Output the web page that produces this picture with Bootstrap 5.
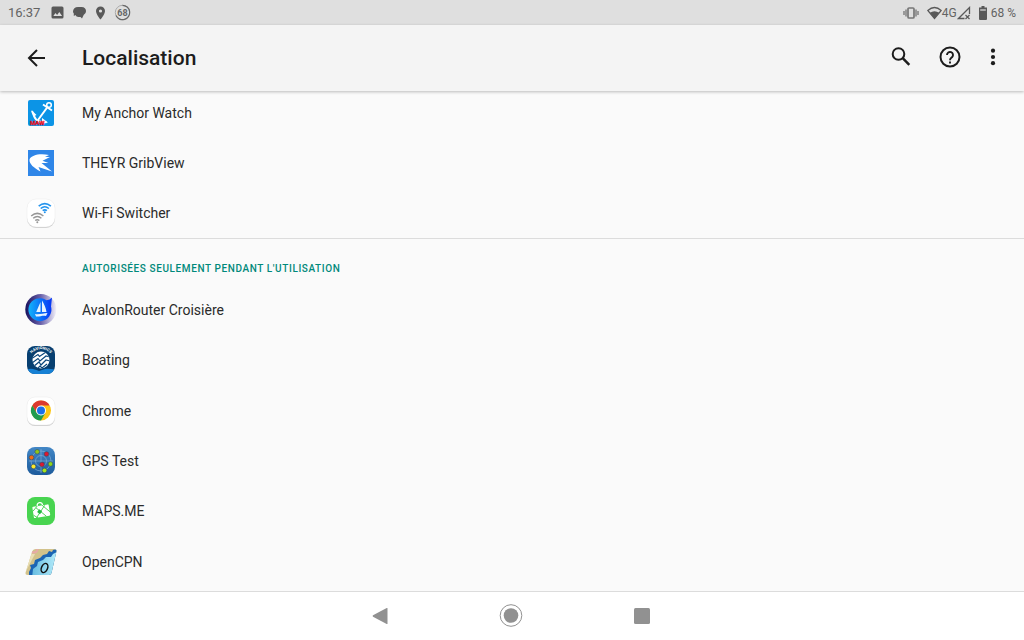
<!DOCTYPE html>
<html lang="fr">
<head>
<meta charset="utf-8">
<meta name="viewport" content="width=device-width, initial-scale=1">
<title>Localisation</title>
<link href="https://cdn.jsdelivr.net/npm/bootstrap@5.3.0/dist/css/bootstrap.min.css" rel="stylesheet">
<style>
  body { font-family: Roboto, "Liberation Sans", sans-serif; font-size: 14px; line-height: 20px; background: #fafafa; color: #2b2b2b; }
  svg { display: block; flex: none; }
  .status-bar { height: 25px; padding: 0 8px; background: #dfdfdf; color: #636363; font-size: 12px; }
  .clock { font-size: 13px; margin-right: 3px; }
  .notices { gap: 8px; }
  .app-bar { height: 66px; padding: 0 23px 0 25px; background: #f4f4f4; color: #1c1c1c; box-shadow: 0 1px 3px rgba(0,0,0,.25); z-index: 2; }
  .app-bar h1 { font-size: 21px; line-height: 28px; font-weight: 500; margin: 0 0 0 33px; }
  .tool-btn { padding: 0; border: 0; background: none; color: inherit; }
  .app-list { padding: 0; margin: 0; list-style: none; }
  .app-list li { flex: 1 1 0; min-height: 46px; }
  .app-list a { height: 100%; padding: 0 25px; gap: 25px; color: #2b2b2b; text-decoration: none; }
  .group-always { height: 151px; margin-top: -3px; border-bottom: 1px solid #dcdcdc; }
  .group-title { font-size: 10px; line-height: 14px; font-weight: 500; letter-spacing: .06em; color: #00897b; padding: 23px 0 9px 82px; margin: 0; text-transform: uppercase; }
  .nav-keys { height: 49px; padding-right: 2px; background: #fff; border-top: 1px solid #dcdcdc; gap: 107px; color: #919191; }
</style>
</head>
<body>
<div class="d-flex flex-column min-vh-100">
  <header class="status-bar d-flex align-items-center justify-content-between">
    <div class="notices d-flex align-items-center">
      <span class="clock">16:37</span>
      <svg width="13" height="13" viewBox="0 0 13 13"><rect x="0.500" y="0.500" width="12" height="12" rx="1.500" fill="#595959"/><path d="M2.300 10l2.200-3 1.600 1.900L8.300 6l2.800 4z" fill="#dfdfdf"/></svg>
      <svg width="15" height="14" viewBox="0 0 15 14"><path d="M6 1h3.500c3 0 4.500 1.800 4.500 4 0 1.800-1 3-2.200 3.800L10 12.500 8.500 11H6.500C5 11 4 10.300 3.500 9L1.800 10V7.500C1.200 7 1 6.200 1 5.500 1 3 3 1 6 1z" fill="#595959"/></svg>
      <svg width="11" height="14" viewBox="0 0 11 14"><path fill-rule="evenodd" d="M5.500.5A4.500 4.500 0 0 0 1 5c0 3.300 4.500 8.500 4.500 8.500S10 8.300 10 5A4.500 4.500 0 0 0 5.500.5zm0 2.900a1.600 1.600 0 1 1 0 3.200 1.600 1.600 0 0 1 0-3.200z" fill="#595959"/></svg>
      <svg width="17" height="17" viewBox="0 0 17 17"><circle cx="8.500" cy="8.500" r="7.200" fill="none" stroke="#aaa" stroke-width="1"/><path d="M8.500 1.300a7.200 7.200 0 1 1-6.500 10.300" fill="none" stroke="#686868" stroke-width="1.200"/><text x="8.500" y="11.800" font-size="9" font-weight="700" text-anchor="middle" fill="#686868">68</text></svg>
    </div>
    <div class="d-flex align-items-center">
      <svg class="me-2" width="16" height="12" viewBox="0 0 16 12"><path d="M1 4v4M3 2.500v7M13 2.500v7M15 4v4" stroke="#8d8d8d" stroke-width="1.700"/><rect x="5" y="1" width="6" height="10" rx="1" fill="none" stroke="#777" stroke-width="1.700"/></svg>
      <svg width="15" height="14" viewBox="0 0 15 14"><path d="M.8 4.500Q7.500-1.500 14.200 4.500L7.500 12.500z" fill="none" stroke="#595959" stroke-width="1.200"/><path d="M2.800 6.800Q7.500 3.500 12.200 6.800L7.500 12.500z" fill="#595959"/></svg>
      <span>4G</span>
      <svg width="14" height="14" viewBox="0 0 14 14"><path d="M7.500 12.500H1.500L12.500 1.500V8" fill="none" stroke="#595959" stroke-width="1.300"/><path d="M8.500 9l4 4m0-4l-4 4" stroke="#595959" stroke-width="1.200"/></svg>
      <svg class="ms-2 me-1" width="8" height="14" viewBox="0 0 8 14"><path d="M2.500 0h3v1.500H8V13a1 1 0 0 1-1 1H1a1 1 0 0 1-1-1V1.500h2.500z" fill="#595959"/><path d="M1.200 3h5.600v2H1.200z" fill="#aaa"/></svg>
      <span>68 %</span>
    </div>
  </header>

  <nav class="app-bar position-relative d-flex align-items-center" aria-label="Barre d'application">
    <button class="tool-btn" type="button" aria-label="Retour"><svg width="24" height="24" viewBox="0 0 24 24"><path d="M20 12H4.500M12 4L4 12l8 8" fill="none" stroke="currentColor" stroke-width="2"/></svg></button>
    <h1>Localisation</h1>
    <div class="d-flex align-items-center ms-auto pb-1">
      <button class="tool-btn" type="button" aria-label="Rechercher"><svg width="24" height="24" viewBox="0 0 24 24"><circle cx="9.500" cy="10" r="5.800" fill="none" stroke="currentColor" stroke-width="2"/><path d="M13.700 14.200L20.300 20.800" stroke="currentColor" stroke-width="2.500"/></svg></button>
      <button class="tool-btn ms-4" type="button" aria-label="Aide"><svg width="26" height="24" viewBox="0 0 26 24"><circle cx="13" cy="13" r="9.500" fill="none" stroke="currentColor" stroke-width="2"/><path d="M10 11a3 3 0 1 1 5.200 2C14 14.200 13 14.500 13 16.200M13 17.500v2" fill="none" stroke="currentColor" stroke-width="1.900"/></svg></button>
      <button class="tool-btn ms-4" type="button" aria-label="Plus d'options"><svg width="14" height="24" viewBox="0 0 14 24" fill="currentColor"><circle cx="6" cy="6.700" r="2.100"/><circle cx="6" cy="13" r="2.100"/><circle cx="6" cy="19.200" r="2.100"/></svg></button>
    </div>
  </nav>

  <main class="d-flex flex-column flex-grow-1">
    <ul class="app-list group-always d-flex flex-column">
      <li><a href="#" class="d-flex align-items-center">
        <svg width="32" height="32" viewBox="0 0 32 32"><rect x="3" y="3" width="26" height="26" rx="2" fill="#0c94e6"/><g fill="none" stroke="#fff"><circle cx="24" cy="8" r="2.300" stroke-width="1.500"/><path d="M22.500 10L13 23M18 7.500l9 6" stroke-width="2"/><path d="M7 14l2 5c1 3 3 4.500 5.500 5.500s5 1 7 .5" stroke-width="2"/></g><path d="M6.500 13l5 5-3 1.500zM17 21l6 4.500-6 1z" fill="#fff"/><text x="5" y="27.500" font-size="6" font-weight="700" fill="#e80f1c" stroke="#e80f1c" stroke-width=".3">MAW</text></svg>
        <span>My Anchor Watch</span></a></li>
      <li><a href="#" class="d-flex align-items-center">
        <svg width="32" height="32" viewBox="0 0 32 32"><rect x="3" y="3" width="26" height="26" fill="#2f86e8"/><path d="M24 8C15 6 6 8 4.500 12.500C4 17 9 21 15.500 24.500L13.500 20L27 24.500L16.500 16L23.500 16L17.500 13.700L25 10L20 10z" fill="#fff"/></svg>
        <span>THEYR GribView</span></a></li>
      <li><a href="#" class="d-flex align-items-center">
        <svg width="32" height="32" viewBox="0 0 32 32"><rect x="2" y="3" width="28" height="28" rx="9" fill="#ccc"/><rect x="2" y="2" width="28" height="28" rx="9" fill="#fff" stroke="#e9e9e9" stroke-width=".5"/><g fill="none" stroke="#2494ee" stroke-width="1.600"><path d="M13.700 9.200Q19.800 4 25.900 9.200M15.700 11.500Q19.800 8 23.900 11.500M17.700 13.700Q19.800 12 21.900 13.700"/></g><circle cx="19.800" cy="15.300" r="1" fill="#2494ee"/><g fill="none" stroke="#979797" stroke-width="1.500"><path d="M6.200 19Q12.300 13.800 18.400 19M8.200 21.300Q12.300 17.800 16.400 21.300M10.200 23.500Q12.300 21.800 14.400 23.500"/></g><circle cx="12.300" cy="25.200" r="1" fill="#979797"/></svg>
        <span>Wi-Fi Switcher</span></a></li>
    </ul>

    <h2 class="group-title">Autorisées seulement pendant l'utilisation</h2>
    <ul class="app-list d-flex flex-column flex-grow-1 pb-1">
      <li><a href="#" class="d-flex align-items-center">
        <svg width="32" height="32" viewBox="0 0 32 32"><defs><linearGradient id="ring"><stop offset="0" stop-color="#17105c"/><stop offset=".5" stop-color="#6b62aa"/><stop offset="1" stop-color="#f3f1fa"/></linearGradient><linearGradient id="sea"><stop offset="0" stop-color="#12b4fa"/><stop offset="1" stop-color="#0735f5"/></linearGradient></defs><circle cx="15.800" cy="15.500" r="15.500" fill="url(#ring)"/><path d="M27 3.500l-1 9a11.500 11.500 0 1 1-4.500-6.300Q25 6 27 3.500z" fill="url(#sea)"/><path d="M15.500 8l-4.300 10h4.300zM17 6.500c2.300 3.700 3.700 7 4.500 11.500H17zM10 20c4 .8 8-.5 12.500-1l-1.500 3c-4-.7-6.500 1-10 .5z" fill="#e8f5ff"/></svg>
        <span>AvalonRouter Croisière</span></a></li>
      <li><a href="#" class="d-flex align-items-center">
        <svg width="32" height="32" viewBox="0 0 32 32"><defs><clipPath id="tile"><rect x="2" y="2" width="28" height="28" rx="8"/></clipPath><clipPath id="globe"><circle cx="16" cy="16" r="8.500"/></clipPath><path id="arc" d="M6 10.500A12 12 0 0 1 26 10.500"/></defs><g clip-path="url(#tile)"><path d="M0 0h32v32H0z" fill="#073f70"/><path d="M0 27q4-3 8-2t6 2q3-1 6-2t12 1v6H0z" fill="#1680d4"/></g><circle cx="16" cy="16" r="8.500" fill="#fff"/><g clip-path="url(#globe)" fill="none" stroke="#0c477b" stroke-width="1.200"><path d="M6 15l7-4.500 1.500 2L21 8M7 19l6-4.500 2 2.500 6-5 4 1M8 23l6-5 2 3 5-5 4 1M12 25l3-3 2 2 5-4"/></g><text font-size="4" font-weight="700" fill="#fff"><textPath href="#arc" startOffset="50%" text-anchor="middle">NAVIONICS</textPath></text></svg>
        <span>Boating</span></a></li>
      <li><a href="#" class="d-flex align-items-center">
        <svg width="32" height="32" viewBox="0 0 32 32"><rect x="2" y="3" width="28" height="28" rx="8" fill="#ccc"/><rect x="2" y="2" width="28" height="28" rx="8" fill="#fff" stroke="#e9e9e9" stroke-width=".5"/><circle cx="16" cy="15.500" r="10" fill="#fcc615"/><path d="M7.300 10.500A10 10 0 0 1 24.700 10.500H16L11.700 18z" fill="#db3a2e"/><path d="M7.300 10.500A10 10 0 0 0 16 25.500L20.300 18H11.700z" fill="#209b50"/><circle cx="16" cy="15.500" r="5" fill="#fff"/><circle cx="16" cy="15.500" r="4" fill="#1b70e8"/></svg>
        <span>Chrome</span></a></li>
      <li><a href="#" class="d-flex align-items-center">
        <svg width="32" height="32" viewBox="0 0 32 32"><defs><linearGradient id="sky" x2="0" y2="1"><stop offset="0" stop-color="#4387c6"/><stop offset="1" stop-color="#1c5b9c"/></linearGradient></defs><rect x="2" y="2" width="28" height="28" rx="8" fill="url(#sky)"/><g fill="none" stroke="#7daad3" stroke-width=".7"><circle cx="16" cy="16" r="10"/><circle cx="16" cy="16" r="5.500"/><path d="M16 4v24M4 16h24"/></g><g stroke="#345" stroke-width=".5"><circle cx="12.200" cy="6.800" r="2.300" fill="#8fc51b"/><circle cx="21.500" cy="9" r="2.300" fill="#dc1830"/><circle cx="6.500" cy="12.500" r="2.300" fill="#ed6b18"/><circle cx="8.500" cy="21.500" r="2.300" fill="#fce82b"/><circle cx="17" cy="19.500" r="2.300" fill="#dc1830"/><circle cx="25.500" cy="19" r="2.300" fill="#8fd51b"/><circle cx="19.500" cy="25.500" r="2.300" fill="#a4e51b"/></g></svg>
        <span>GPS Test</span></a></li>
      <li><a href="#" class="d-flex align-items-center">
        <svg width="32" height="32" viewBox="0 0 32 32"><rect x="2" y="2" width="28" height="28" rx="8" fill="#48d450"/><g transform="rotate(-9 16 16)"><path d="M13 10.500c0-4 5.500-4 5.500 0" fill="none" stroke="#fff" stroke-width="1.200"/><rect x="8" y="10.500" width="16.500" height="11.500" rx="1" fill="#fff"/><path d="M8 15l5-4.500M8 19l4 3.500M11.500 12l9 10M20.500 11l-10 11M18 10.500l7 8" stroke="#48d450" stroke-width=".9"/><path d="M14.500 14l2.500 2.500-2.500 2.500-2.500-2.500z" fill="#20b93e"/></g></svg>
        <span>MAPS.ME</span></a></li>
      <li><a href="#" class="d-flex align-items-center">
        <svg width="32" height="32" viewBox="0 0 32 32"><defs><clipPath id="chart"><path d="M11 3h18q3 0 2.400 2.500L26.500 27q-.5 2-3 2H3q-3 0-2.400-2.500L7 6q1-3 4-3z"/></clipPath><linearGradient id="water"><stop offset="0" stop-color="#67bce0"/><stop offset="1" stop-color="#b5ecfa"/></linearGradient></defs><g clip-path="url(#chart)"><path d="M0 0h32v32H0z" fill="#d2c28b"/><path d="M0 8h10L0 27z" fill="#eadfb5"/><path d="M32 3l-4 1-1 2-3-1-2 3-4 1-3 3-5 2-1 4-4 1 1 3-2 4v5h28z" fill="#1c65b4"/><path d="M32 6l-4 2-2 3-5 0-3 3-5 2-1 4-4 3-1 9h25z" fill="url(#water)"/><circle cx="9" cy="3" r="3.500" fill="none" stroke="#e9a9a8" stroke-width="2"/></g><ellipse cx="19.500" cy="22" rx="3" ry="4.800" transform="rotate(24 19.500 22)" fill="none" stroke="#111" stroke-width="1.500"/></svg>
        <span>OpenCPN</span></a></li>
    </ul>
  </main>

  <footer class="nav-keys d-flex align-items-center justify-content-center">
    <button class="tool-btn" type="button" aria-label="Retour système"><svg width="24" height="24" viewBox="0 0 24 24"><path d="M19.500 4.500v15q0 .8-.8.400L5 12.700q-.8-.7 0-1.400L18.700 4q.8-.4.800.5z" fill="currentColor"/></svg></button>
    <button class="tool-btn" type="button" aria-label="Accueil"><svg width="24" height="24" viewBox="0 0 24 24"><circle cx="12" cy="11.500" r="10.800" fill="none" stroke="currentColor"/><circle cx="12" cy="11.500" r="7.300" fill="currentColor"/></svg></button>
    <button class="tool-btn" type="button" aria-label="Applications récentes"><svg width="24" height="24" viewBox="0 0 24 24"><rect x="4" y="4" width="16" height="16" rx="1.500" fill="currentColor"/></svg></button>
  </footer>
</div>
<script src="https://cdn.jsdelivr.net/npm/bootstrap@5.3.0/dist/js/bootstrap.bundle.min.js"></script>
</body>
</html>
